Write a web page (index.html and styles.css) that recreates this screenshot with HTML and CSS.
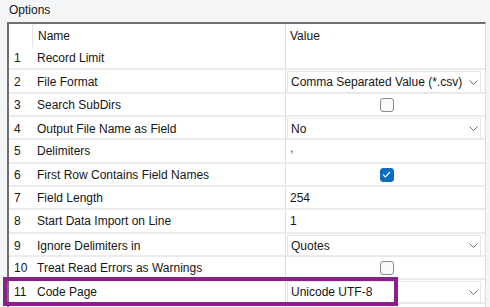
FILE: index.html
```html
<!DOCTYPE html>
<html>
<head>
<meta charset="UTF-8">
<title>Options</title>
<link rel="stylesheet" href="styles.css">
</head>
<body>
<div class="caption">Options</div>
<div class="grid">
	<div class="row row_head">
		<div class="cel_num"></div>
		<div class="cel_name head_sep">Name</div>
		<div class="cel_value">Value</div>
	</div>
	<div class="row">
		<div class="cel_num">1</div>
		<div class="cel_name">Record Limit</div>
		<div class="cel_value"></div>
	</div>
	<div class="row">
		<div class="cel_num">2</div>
		<div class="cel_name">File Format</div>
		<div class="cel_value"><div class="combo"><span>Comma Separated Value (*.csv)</span><svg class="chevron" width="9" height="5" viewBox="0 0 9 5"><path d="M0.5 0.5 L4.5 4.5 L8.5 0.5" fill="none" stroke="#707070" stroke-width="1"/></svg></div></div>
	</div>
	<div class="row">
		<div class="cel_num">3</div>
		<div class="cel_name">Search SubDirs</div>
		<div class="cel_value cel_check"><span class="chk"></span></div>
	</div>
	<div class="row">
		<div class="cel_num">4</div>
		<div class="cel_name">Output File Name as Field</div>
		<div class="cel_value"><div class="combo"><span>No</span><svg class="chevron" width="9" height="5" viewBox="0 0 9 5"><path d="M0.5 0.5 L4.5 4.5 L8.5 0.5" fill="none" stroke="#707070" stroke-width="1"/></svg></div></div>
	</div>
	<div class="row">
		<div class="cel_num">5</div>
		<div class="cel_name">Delimiters</div>
		<div class="cel_value"><span class="delim">,</span></div>
	</div>
	<div class="row">
		<div class="cel_num">6</div>
		<div class="cel_name">First Row Contains Field Names</div>
		<div class="cel_value cel_check"><span class="chk chk_on"><svg width="9" height="7" viewBox="0 0 9 7"><path d="M1 3.6 L3.4 6 L8 1" fill="none" stroke="#ffffff" stroke-width="1.2"/></svg></span></div>
	</div>
	<div class="row">
		<div class="cel_num">7</div>
		<div class="cel_name">Field Length</div>
		<div class="cel_value">254</div>
	</div>
	<div class="row">
		<div class="cel_num">8</div>
		<div class="cel_name">Start Data Import on Line</div>
		<div class="cel_value">1</div>
	</div>
	<div class="row">
		<div class="cel_num">9</div>
		<div class="cel_name">Ignore Delimiters in</div>
		<div class="cel_value"><div class="combo"><span>Quotes</span><svg class="chevron" width="9" height="5" viewBox="0 0 9 5"><path d="M0.5 0.5 L4.5 4.5 L8.5 0.5" fill="none" stroke="#707070" stroke-width="1"/></svg></div></div>
	</div>
	<div class="row">
		<div class="cel_num">10</div>
		<div class="cel_name">Treat Read Errors as Warnings</div>
		<div class="cel_value cel_check"><span class="chk"></span></div>
	</div>
	<div class="row row_mark">
		<div class="cel_num">11</div>
		<div class="cel_name">Code Page</div>
		<div class="cel_value"><div class="combo"><span>Unicode UTF-8</span><svg class="chevron" width="9" height="5" viewBox="0 0 9 5"><path d="M0.5 0.5 L4.5 4.5 L8.5 0.5" fill="none" stroke="#707070" stroke-width="1"/></svg></div></div>
	</div>
	<div class="row row_last">
		<div class="cel_num"></div>
		<div class="cel_name"></div>
		<div class="cel_value"></div>
	</div>
</div>
</body>
</html>
```
FILE: styles.css
```css
/* page */
body {
	margin: 0;
	background-color: #f4f5f7;
	font-family: "Liberation Sans", Arial, sans-serif;
	font-size: 12px;
	color: #161616;
	overflow: hidden;
}

.caption {
	height: 22px;
	line-height: 21px;
	padding-left: 9px;
}

/* grid */
.grid {
	margin-left: 7px;
	width: 476px;
	border-left: 2px solid #707070;
	border-top: 2px solid #707070;
	border-right: 1px solid #dcdcdc;
	background-color: #ffffff;
}

.row {
	display: grid;
	grid-template-columns: 23px 253px 1fr;
	height: 23.33px;
	box-sizing: border-box;
	border-bottom: 2px solid #ececec;
}

.row > div {
	display: flex;
	align-items: center;
	white-space: nowrap;
	padding-top: 1px;
}

.row_head {
	height: 23px;
	border-bottom: 0;
}

.row_last {
	height: 10px;
	border-bottom: 0;
}

.cel_num {
	padding-left: 5px;
}

.cel_name {
	padding-left: 5px;
}

.head_sep {
	border-left: 1px solid #e4e4e4;
}

.cel_value {
	border-left: 1px solid #dedede;
	padding-left: 4px;
}

.cel_check {
	justify-content: center;
	padding-left: 0;
	padding-right: 0;
}

/* combo */
.combo {
	flex: 1;
	display: flex;
	align-items: center;
	justify-content: space-between;
	height: 20px;
	margin-left: -3px;
	margin-right: 4px;
	padding-left: 3px;
	padding-right: 2px;
	border: 1px solid #e6e6e6;
}

.chevron {
	display: block;
}

.delim {
	color: #6a2c86;
	position: relative;
	top: -3px;
}

/* checkbox */
.chk {
	width: 12px;
	height: 12px;
	border: 1px solid #8a8a8a;
	border-radius: 3px;
	background-color: #f9f9f9;
	display: flex;
	align-items: center;
	justify-content: center;
	margin-left: 2px;
}

.chk_on {
	border-color: #0f6cbd;
	background-color: #0f6cbd;
}

/* highlight */
.row_mark {
	position: relative;
}
.row_mark::after {
	content: "";
	position: absolute;
	left: -6px;
	top: -3px;
	width: 387px;
	height: 21px;
	border: 4px solid #8c1f8c;
	pointer-events: none;
}
```
